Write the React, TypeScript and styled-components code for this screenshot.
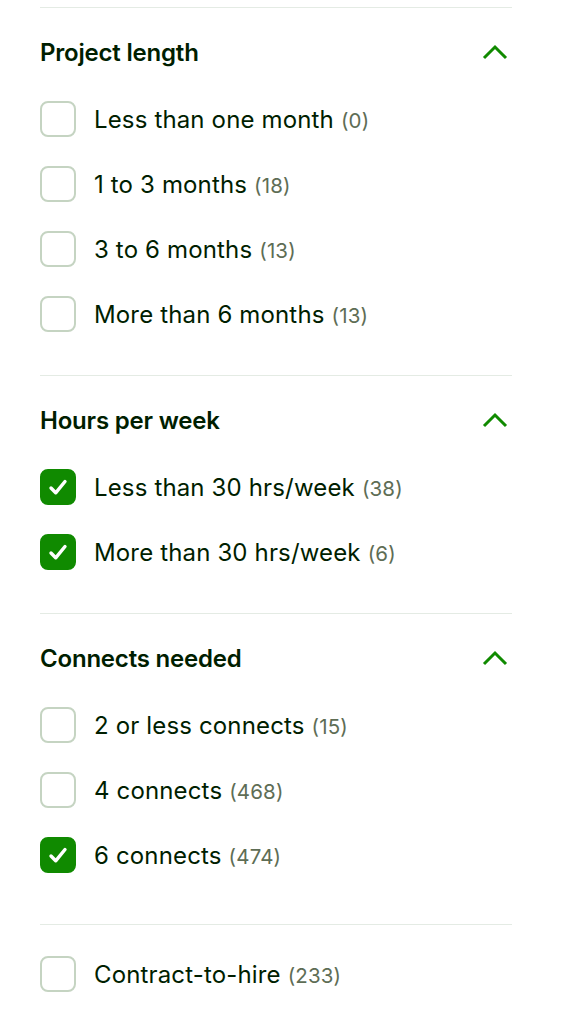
import styled, { createGlobalStyle } from 'styled-components';

const GlobalStyle = createGlobalStyle`
  body {
    margin: 0;
    background: #fff;
    font-family: Inter, "Liberation Sans", Arial, sans-serif;
    color: #001e00;
  }
`;

const Panel = styled.div`
  width: 472px;
  margin: 0 0 0 40px;
  padding-top: 7px;
`;

const Section = styled.section<{ padBottom: number }>`
  border-top: 1px solid #e4ebe4;
  padding: 29px 0 ${(p) => p.padBottom}px;
`;

const Header = styled.div`
  display: flex;
  align-items: center;
  justify-content: space-between;
  height: 30px;
  margin-bottom: 34px;
`;

const Title = styled.h3`
  margin: 0;
  font-size: 24px;
  font-weight: 600;
  letter-spacing: -0.2px;
  color: #001e00;
`;

const Chevron = styled.svg`
  width: 28px;
  height: 18px;
  margin-right: 3px;
`;

const List = styled.div`
  display: flex;
  flex-direction: column;
  gap: 29px;
`;

const Row = styled.label`
  display: flex;
  align-items: center;
  gap: 18px;
  height: 36px;
  cursor: pointer;
`;

const Box = styled.span<{ checked: boolean }>`
  box-sizing: border-box;
  width: 36px;
  height: 36px;
  flex-shrink: 0;
  border-radius: 8px;
  border: 2px solid ${(p) => (p.checked ? '#108a00' : '#c5d4c2')};
  background: ${(p) => (p.checked ? '#108a00' : '#fff')};
  display: flex;
  align-items: center;
  justify-content: center;
`;

const Label = styled.span`
  font-size: 24px;
  color: #001e00;
  letter-spacing: 0.15px;
`;

const Count = styled.span`
  font-size: 20.5px;
  color: #5e6d55;
  margin-left: 7px;
`;

type Option = { label: string; count: number; checked?: boolean };

const groups: { title: string; padBottom: number; options: Option[] }[] = [
  {
    title: 'Project length',
    padBottom: 43,
    options: [
      { label: 'Less than one month', count: 0 },
      { label: '1 to 3 months', count: 18 },
      { label: '3 to 6 months', count: 13 },
      { label: 'More than 6 months', count: 13 },
    ],
  },
  {
    title: 'Hours per week',
    padBottom: 43,
    options: [
      { label: 'Less than 30 hrs/week', count: 38, checked: true },
      { label: 'More than 30 hrs/week', count: 6, checked: true },
    ],
  },
  {
    title: 'Connects needed',
    padBottom: 51,
    options: [
      { label: '2 or less connects', count: 15 },
      { label: '4 connects', count: 468 },
      { label: '6 connects', count: 474, checked: true },
    ],
  },
];

function Check({ option }: { option: Option }) {
  return (
    <Row>
      <Box checked={!!option.checked}>
        {option.checked && (
          <svg width="24" height="24" viewBox="0 0 24 24">
            <path
              d="M5 13l4.7 4.8L19 6.5"
              fill="none"
              stroke="#fff"
              strokeWidth="3.4"
              strokeLinecap="round"
              strokeLinejoin="round"
            />
          </svg>
        )}
      </Box>
      <Label>
        {option.label}
        <Count>({option.count})</Count>
      </Label>
    </Row>
  );
}

const Bottom = styled.div`
  border-top: 1px solid #e4ebe4;
  padding-top: 31px;
`;

export default function App() {
  return (
    <>
      <GlobalStyle />
      <Panel>
        {groups.map((g) => (
          <Section key={g.title} padBottom={g.padBottom}>
            <Header>
              <Title>{g.title}</Title>
              <Chevron viewBox="0 0 28 18">
                <path
                  d="M3 15L14 4l11 11"
                  fill="none"
                  stroke="#108a00"
                  strokeWidth="3"
                />
              </Chevron>
            </Header>
            <List>
              {g.options.map((o) => (
                <Check key={o.label} option={o} />
              ))}
            </List>
          </Section>
        ))}
        <Bottom>
          <Check option={{ label: 'Contract-to-hire', count: 233 }} />
        </Bottom>
      </Panel>
    </>
  );
}
